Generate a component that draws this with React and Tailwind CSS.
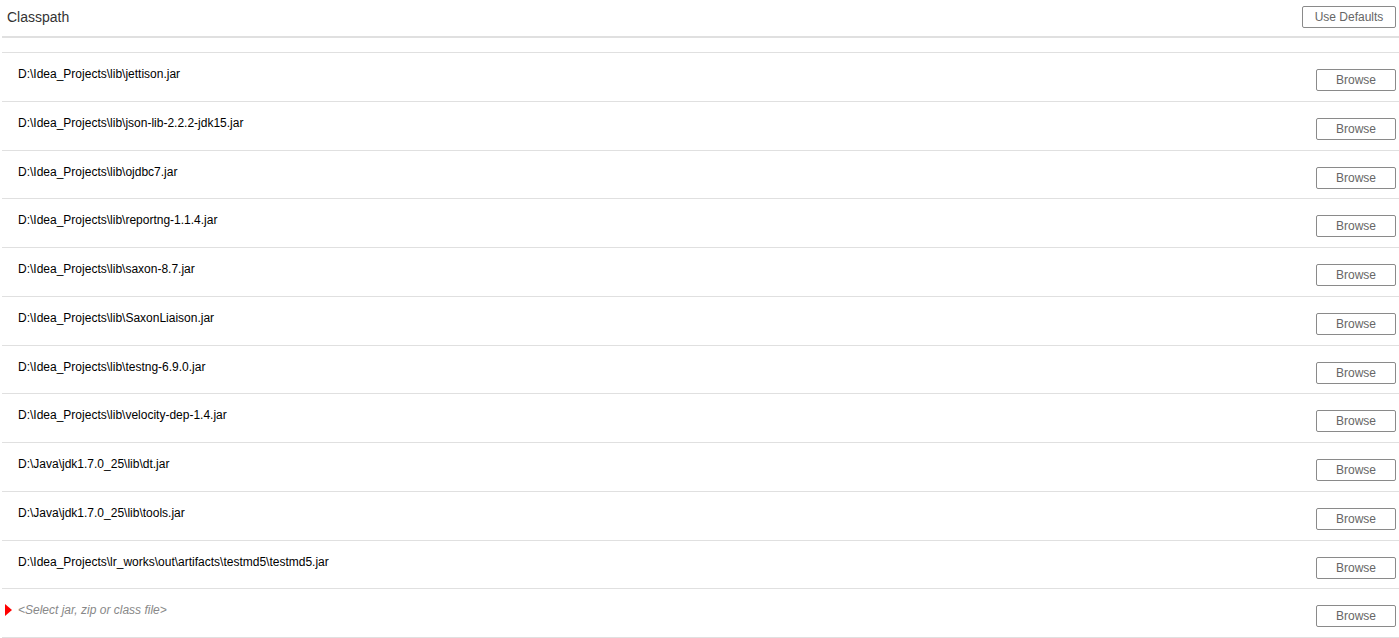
import React from 'react';

const paths = [
  'D:\\Idea_Projects\\lib\\jettison.jar',
  'D:\\Idea_Projects\\lib\\json-lib-2.2.2-jdk15.jar',
  'D:\\Idea_Projects\\lib\\ojdbc7.jar',
  'D:\\Idea_Projects\\lib\\reportng-1.1.4.jar',
  'D:\\Idea_Projects\\lib\\saxon-8.7.jar',
  'D:\\Idea_Projects\\lib\\SaxonLiaison.jar',
  'D:\\Idea_Projects\\lib\\testng-6.9.0.jar',
  'D:\\Idea_Projects\\lib\\velocity-dep-1.4.jar',
  'D:\\Java\\jdk1.7.0_25\\lib\\dt.jar',
  'D:\\Java\\jdk1.7.0_25\\lib\\tools.jar',
  'D:\\Idea_Projects\\lr_works\\out\\artifacts\\testmd5\\testmd5.jar',
];

const BrowseButton = () => (
  <button className="w-[80px] h-[22px] border border-[#8a8a8a] rounded-[2px] bg-white text-[12px] text-[#666] leading-none">
    Browse
  </button>
);

const App = () => {
  return (
    <div className="w-[1399px] h-[638px] bg-white overflow-hidden" style={{ fontFamily: '"Liberation Sans", Arial, sans-serif' }}>
      {/* Header */}
      <div className="h-[36px] flex items-start justify-between pl-[7px] pr-[3px]">
        <span className="pt-[9px] text-[14px] leading-[16px] text-[#333]">Classpath</span>
        <button className="mt-[6px] w-[94px] h-[22px] border border-[#8a8a8a] rounded-[2px] bg-white text-[12px] text-[#666] leading-none">
          Use Defaults
        </button>
      </div>
      <div className="ml-[2px] h-[2px] bg-[#e0e0e0]"></div>

      {/* Rows */}
      <div className="ml-[2px] mt-[14px] border-t border-[#e0e0e0]">
        {paths.map((p) => (
          <div key={p} className="h-[48.75px] box-border border-b border-[#e0e0e0] flex items-start justify-between pl-[16px] pr-[3px]">
            <span className="pt-[14px] text-[12px] leading-[14px] text-black">{p}</span>
            <div className="pt-[14px]">
              <BrowseButton />
            </div>
          </div>
        ))}
        <div className="h-[48.75px] box-border border-b border-[#e0e0e0] flex items-start justify-between pl-[3px] pr-[3px]">
          <div className="pt-[14px] flex items-center">
            <svg width="7" height="12" viewBox="0 0 7 12" className="mr-[6px]">
              <polygon points="0,0 7,6 0,12" fill="#ff0000" />
            </svg>
            <span className="text-[12px] leading-[14px] italic text-[#888]">&lt;Select jar, zip or class file&gt;</span>
          </div>
          <div className="pt-[14px]">
            <BrowseButton />
          </div>
        </div>
      </div>
    </div>
  );
};

export default App;
